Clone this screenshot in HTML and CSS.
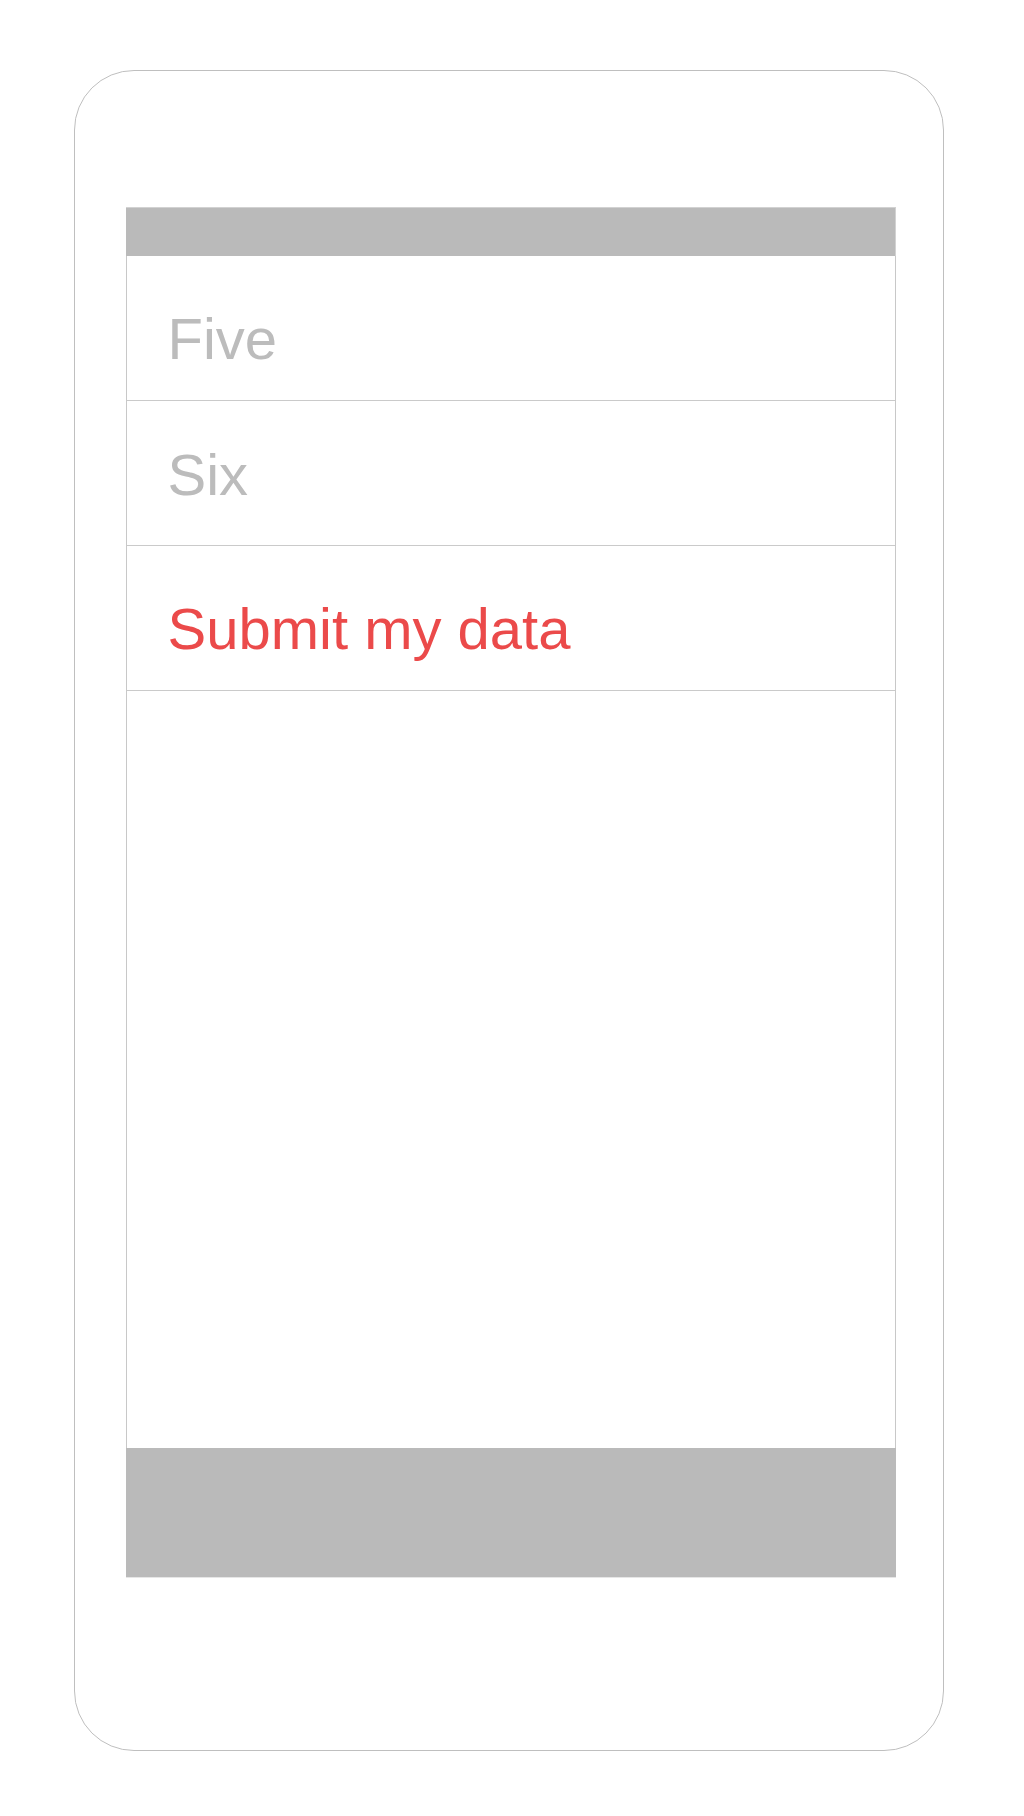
FILE: index.html
```html
<!DOCTYPE html>
<html lang="en">
<head>
<meta charset="utf-8">
<title>Form</title>
<link rel="stylesheet" href="styles.css">
</head>
<body>
<div class="page">
  <div class="phone">
    <div class="screen">
      <div class="bar bar--top"></div>
      <div class="content">
        <div class="row"><span class="label">Five</span></div>
        <div class="row row--raised"><span class="label">Six</span></div>
        <div class="row"><span class="label label--action">Submit my data</span></div>
      </div>
      <div class="bar bar--bottom"></div>
    </div>
  </div>
</div>
</body>
</html>
```
FILE: styles.css
```css
html, body {
  margin: 0;
  padding: 0;
  background: #ffffff;
}

.page {
  width: 1024px;
  height: 1816px;
  padding: 70px 0 0 74px;
  box-sizing: border-box;
}

.phone {
  width: 870px;
  height: 1681px;
  box-sizing: border-box;
  border: 1px solid #bfbfbf;
  border-radius: 60px;
  padding: 136px 0 0 50.5px;
}

.screen {
  width: 770px;
  height: 1371px;
  display: flex;
  flex-direction: column;
}

.bar {
  background: #bababa;
  flex: none;
}

.bar--top {
  height: 49px;
  box-sizing: border-box;
  border-top: 1px solid #d2d2d2;
  border-right: 1px solid #d2d2d2;
}

.bar--bottom {
  height: 130px;
  box-sizing: border-box;
  border-bottom: 1px solid #e6e6e6;
}

.content {
  flex: 1;
  border-left: 1px solid #c8c8c8;
  border-right: 1px solid #c8c8c8;
  display: flex;
  flex-direction: column;
}

.row {
  height: 145px;
  box-sizing: border-box;
  border-bottom: 1px solid #cacaca;
  padding: 54px 0 0 41px;
}

.row--raised {
  padding-top: 45px;
}

.label {
  display: block;
  font-family: "Liberation Sans", Arial, sans-serif;
  font-size: 58px;
  line-height: 58px;
  color: #bcbcbc;
}

.label--action {
  color: #eb4a4a;
}
```
